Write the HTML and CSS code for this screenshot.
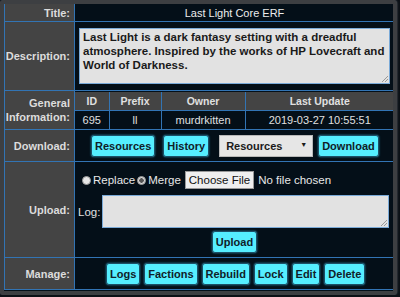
FILE: index.html
```html
<!DOCTYPE html>
<html>
<head>
<meta charset="utf-8">
<link rel="stylesheet" href="styles.css">
</head>
<body>
<div class="frame">
<table class="main">
  <colgroup><col class="col-lbl"><col></colgroup>
  <tr class="r-title">
    <th class="lbl">Title:</th>
    <td class="title-cell">Last Light Core ERF</td>
  </tr>
  <tr class="r-desc">
    <th class="lbl">Description:</th>
    <td class="desc-cell"><div class="desc-box">Last Light is a dark fantasy setting with a dreadful atmosphere. Inspired by the works of HP Lovecraft and World of Darkness.<span class="grip"></span></div></td>
  </tr>
  <tr class="r-info">
    <th class="lbl">General<br>Information:</th>
    <td class="info-cell">
      <table class="info">
        <colgroup><col class="c-id"><col class="c-pre"><col class="c-own"><col></colgroup>
        <tr class="ih"><th>ID</th><th>Prefix</th><th>Owner</th><th>Last Update</th></tr>
        <tr class="id"><td>695</td><td>ll</td><td>murdrkitten</td><td>2019-03-27 10:55:51</td></tr>
      </table>
    </td>
  </tr>
  <tr class="r-dl">
    <th class="lbl">Download:</th>
    <td class="dl-cell">
      <div class="row dl-row">
        <span class="btn b-res">Resources</span>
        <span class="btn b-hist">History</span>
        <span class="select">Resources<span class="arrow">▼</span></span>
        <span class="btn">Download</span>
      </div>
    </td>
  </tr>
  <tr class="r-up">
    <th class="lbl">Upload:</th>
    <td class="up-cell">
      <div class="row radios">
        <span class="radio"></span><span class="rtxt">Replace</span>
        <span class="radio checked"></span><span class="rtxt">Merge</span>
        <span class="file-btn">Choose File</span><span class="nofile">No file chosen</span>
      </div>
      <div class="row logrow">
        <span class="logl">Log:</span>
        <div class="logbox"><span class="grip"></span></div>
      </div>
      <div class="row uprow"><span class="btn">Upload</span></div>
    </td>
  </tr>
  <tr class="r-man">
    <th class="lbl">Manage:</th>
    <td class="man-cell">
      <div class="row man-row">
        <span class="btn">Logs</span>
        <span class="btn">Factions</span>
        <span class="btn">Rebuild</span>
        <span class="btn">Lock</span>
        <span class="btn">Edit</span>
        <span class="btn">Delete</span>
      </div>
    </td>
  </tr>
</table>
</div>
</body>
</html>
```

FILE: styles.css
```css
html, body {
  margin: 0;
  padding: 0;
  background: #0b1016;
  font-family: "Liberation Sans", Arial, sans-serif;
  font-size: 11px;
}
.frame {
  width: 389px;
  height: 287px;
  border: 4px solid #3d3f42;
  border-radius: 4px;
  background: #041019;
  box-shadow: 0 0 2px #6a7078;
  overflow: hidden;
}
.main {
  border-collapse: collapse;
  table-layout: fixed;
  width: 390px;
}
.col-lbl { width: 70px; }
.main > tbody > tr > th,
.main > tbody > tr > td {
  border: 1px solid #3274b4;
  padding: 0;
}
.main > tbody > tr:first-child > * { border-top: none; }
.main > tbody > tr > td { border-right: none; }
.lbl {
  background: #444444;
  color: #dcdcdc;
  font-weight: bold;
  font-size: 11px;
  text-align: right;
  padding-right: 4px !important;
  line-height: 14px;
}
.r-title > * { height: 17px; }
.title-cell {
  background: #040f18;
  color: #ececec;
  text-align: center;
}
.r-desc > * { height: 68px; }
.desc-cell { background: #040f18; }
.desc-box {
  position: relative;
  margin: 0 4px 0 4px;
  height: 52px;
  background: #e2e2e2;
  border: 1px solid #7aaad8;
  color: #1a1a1a;
  font-weight: bold;
  font-size: 11.5px;
  line-height: 14px;
  padding: 1px 3px;
}
.grip {
  position: absolute;
  right: 1px;
  bottom: 1px;
  width: 6px;
  height: 6px;
  background: linear-gradient(135deg, transparent 45%, #999 45%, #999 55%, transparent 55%, transparent 70%, #999 70%, #999 80%, transparent 80%);
}
.r-info > * { height: 38px; }
.info-cell { background: #040f18; }
.info {
  border-collapse: collapse;
  table-layout: fixed;
  width: 100%;
  color: #e0e0e0;
}
.info th, .info td {
  border: 1px solid #3274b4;
  text-align: center;
  padding: 0;
  height: 18px;
}
.info tr:first-child th { border-top: none; }
.info tr:last-child td { border-bottom: none; }
.info th:first-child, .info td:first-child { border-left: none; }
.info th:last-child, .info td:last-child { border-right: none; }
.info th {
  background: #444444;
  font-weight: bold;
  font-size: 10.5px;
  color: #e0e0e0;
}
.c-id { width: 34px; }
.c-pre { width: 52px; }
.c-own { width: 84px; }
.row { display: flex; align-items: center; }
.r-dl > * { height: 31px; }
.dl-cell, .up-cell, .man-cell { background: #040f18; }
.dl-row { gap: 5px; padding-left: 16px; }
.btn {
  display: inline-block;
  background: #55eeff;
  color: #102028;
  font-weight: bold;
  font-size: 11px;
  border: 1px solid #1c4f66;
  border-radius: 3px;
  box-shadow: 0 0 2px #2a8fb0;
  padding: 3px 3px;
  line-height: 14px;
}
.dl-row .b-res { margin-right: 3px; }
.dl-row .b-hist { margin-right: 5px; }
.select {
  position: relative;
  display: inline-block;
  width: 80px;
  background: #e6e6e6;
  border: 1px solid #b8b8b8;
  color: #1a1a1a;
  font-weight: bold;
  font-size: 11px;
  padding: 3px 6px;
  line-height: 14px;
}
.arrow {
  position: absolute;
  right: 5px;
  top: 5px;
  font-size: 7px;
  line-height: 8px;
}
.r-up > * { height: 95px; }
.up-cell { vertical-align: top; }
.radios {
  color: #e8e8e8;
  padding: 10px 0 0 7px;
  height: 16px;
}
.radio {
  width: 9px;
  height: 9px;
  border-radius: 50%;
  background: #e6e6e6;
  border: 1px solid #999;
  box-sizing: border-box;
  margin-right: 2px;
}
.radio.checked {
  background: radial-gradient(circle, #555 0 2px, #d6d6d6 2.5px);
}
.rtxt { margin-right: 4px; font-size: 11.5px; }
.rtxt:nth-of-type(2) { margin-right: 2px; }
.file-btn {
  background: #efefef;
  color: #111;
  border: 1px solid #999;
  padding: 1px 3px;
  line-height: 14px;
  font-size: 11.5px;
}
.nofile { margin-left: 4px; color: #e8e8e8; font-size: 11.5px; }
.logrow { padding: 7px 0 0 3px; }
.logl { color: #e0e0e0; width: 24px; font-size: 11.5px; }
.logbox {
  position: relative;
  width: 285px;
  height: 31px;
  background: #e2e2e2;
  border: 1px solid #7aaad8;
}
.uprow { justify-content: center; padding: 3px 0 0 0; }
.r-man > * { height: 31px; }
.man-row { gap: 4px; padding-left: 31px; }
```
